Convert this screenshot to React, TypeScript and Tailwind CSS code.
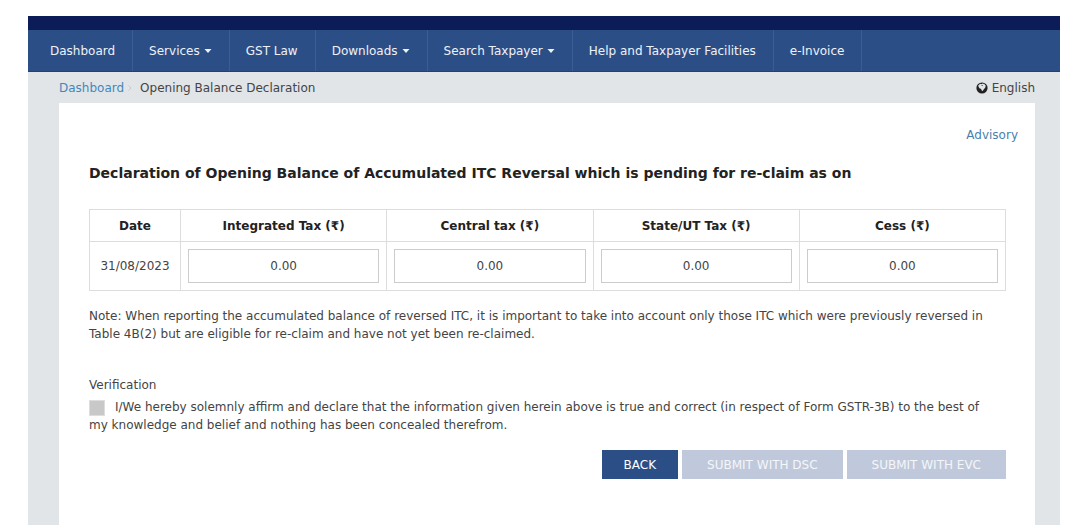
type NavItem = { label: string; menu?: boolean };

const navItems: NavItem[] = [
  { label: "Dashboard" },
  { label: "Services", menu: true },
  { label: "GST Law" },
  { label: "Downloads", menu: true },
  { label: "Search Taxpayer", menu: true },
  { label: "Help and Taxpayer Facilities" },
  { label: "e-Invoice" },
];

const taxHeads = ["Integrated Tax (₹)", "Central tax (₹)", "State/UT Tax (₹)", "Cess (₹)"];

function Caret() {
  return (
    <svg viewBox="0 0 8 4" className="ml-1 h-1 w-2 fill-current" aria-hidden="true">
      <path d="M0.5 0h7L4 4z" />
    </svg>
  );
}

function Globe() {
  return (
    <svg viewBox="0 0 12 12" className="size-3" aria-hidden="true">
      <circle cx="6" cy="6" r="5.6" fill="#222222" />
      <path
        d="M2.2 3.4 4.2 1.7 5.2 2.3 6.6 1.6 8.6 2.2 9.8 3.8 9.2 5.8 7.8 7.2 6.8 8.9 5.4 8.2 5.2 6.9 3.4 6.2 2.6 4.8z"
        fill="#e1e5e8"
      />
      <path d="M5.4 3.3 6.6 2.9 6.8 3.7 5.9 4.1z" fill="#222222" />
    </svg>
  );
}

function NavBar() {
  return (
    <nav className="border-b border-[#24426f] bg-[#2c4e86] pl-1.5">
      <ul className="flex">
        {navItems.map((item) => (
          <li key={item.label} className="border-r border-[#3b5c94]">
            <a href="#" className="flex h-[41px] items-center pr-[17px] pl-4 whitespace-nowrap text-[#eef2f8]">
              {item.label}
              {item.menu && <Caret />}
            </a>
          </li>
        ))}
      </ul>
    </nav>
  );
}

function BalanceTable() {
  return (
    <table className="mt-[26px] w-full table-fixed border-collapse text-center">
      <thead>
        <tr className="h-8">
          <th scope="col" className="w-[91px] border border-[#dddddd] font-bold text-[#222222]">
            Date
          </th>
          {taxHeads.map((head) => (
            <th key={head} scope="col" className="border border-[#dddddd] font-bold text-[#222222]">
              {head}
            </th>
          ))}
        </tr>
      </thead>
      <tbody>
        <tr>
          <td className="border border-[#dddddd]">31/08/2023</td>
          {taxHeads.map((head) => (
            <td key={head} className="border border-[#dddddd] p-[7px]">
              <input
                type="text"
                aria-label={head}
                defaultValue="0.00"
                className="block h-[34px] w-full border border-[#cccccc] bg-white text-center"
              />
            </td>
          ))}
        </tr>
      </tbody>
    </table>
  );
}

export default function App() {
  return (
    <div className="min-h-screen bg-white pt-4 pr-[25px] pl-7 font-['DejaVu_Sans',Verdana,sans-serif] text-xs text-[#444444]">
      <div className="flex min-h-[calc(100vh-16px)] flex-col bg-[#e1e5e8]">
        <header>
          <div className="h-3.5 bg-[#0b1c58]" />
          <NavBar />
        </header>
        <div className="flex h-[31px] items-center justify-between pr-[25px] pl-[31px]">
          <nav aria-label="Breadcrumb">
            <ol className="flex items-center gap-1">
              <li>
                <a href="#" className="text-[#4487bd]">
                  Dashboard
                </a>
              </li>
              <li aria-hidden="true" className="w-2">
                <svg viewBox="0 0 4 6" className="h-1.5 w-1 fill-none stroke-[#c4c9ce]">
                  <path d="M0.5 0.5 3 3 0.5 5.5" />
                </svg>
              </li>
              <li>Opening Balance Declaration</li>
            </ol>
          </nav>
          <button type="button" className="flex items-center gap-1">
            <Globe />
            English
          </button>
        </div>
        <main className="mr-[25px] ml-[31px] grow bg-white pt-6 pr-[29px] pb-11 pl-[30px]">
          <div className="-mr-3 flex justify-end">
            <a href="#" className="text-[#4a7fae]">
              Advisory
            </a>
          </div>
          <h1 className="mt-5 text-sm leading-5 font-bold text-[#222222]">
            Declaration of Opening Balance of Accumulated ITC Reversal which is pending for re-claim as on
          </h1>
          <BalanceTable />
          <p className="mt-4 leading-[18px]">
            Note: When reporting the accumulated balance of reversed ITC, it is important to take into account only
            those ITC which were previously reversed in Table 4B(2) but are eligible for re-claim and have not yet been
            re-claimed.
          </p>
          <section className="mt-[33px] pr-3 leading-[18px]">
            <h2 className="mb-1">Verification</h2>
            <label>
              <input
                type="checkbox"
                disabled
                className="mr-2.5 size-4 appearance-none border border-[#dddddd] bg-[#c8c8c8] align-middle"
              />
              I/We hereby solemnly affirm and declare that the information given herein above is true and correct (in
              respect of Form GSTR-3B) to the best of my knowledge and belief and nothing has been concealed therefrom.
            </label>
          </section>
          <div className="mt-4 flex justify-end gap-1">
            <button type="button" className="h-[29px] bg-[#2c4e86] px-[22px] text-white">
              BACK
            </button>
            <button type="button" disabled className="h-[29px] bg-[#c0c9db] px-[25px] text-[#f4f6fa]">
              SUBMIT WITH DSC
            </button>
            <button type="button" disabled className="h-[29px] bg-[#c0c9db] px-[25px] text-[#f4f6fa]">
              SUBMIT WITH EVC
            </button>
          </div>
        </main>
      </div>
    </div>
  );
}
